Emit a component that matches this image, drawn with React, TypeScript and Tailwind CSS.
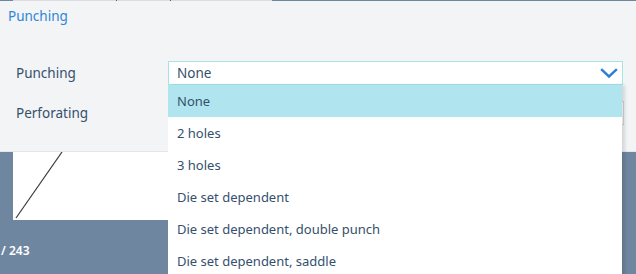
const font = { fontFamily: '"Noto Sans", "Open Sans", Arial, sans-serif' }

const options = [
  'None',
  '2 holes',
  '3 holes',
  'Die set dependent',
  'Die set dependent, double punch',
  'Die set dependent, saddle',
]

function Chevron() {
  return (
    <svg width="18" height="12" viewBox="0 0 18 12" fill="none" stroke="#2f7fd6" strokeWidth="2.4" strokeLinecap="square">
      <polyline points="2 3 9 9.5 16 3" />
    </svg>
  )
}

export default function App() {
  return (
    <div className="relative w-[636px] h-[274px] overflow-hidden bg-[#6f86a0]" style={font}>
      {/* top edge */}
      <div className="flex h-px">
        <div className="w-[13px] bg-[#6f86a0]" />
        <div className="w-[103px] bg-[#d9dde2]" />
        <div className="w-px bg-[#55606c]" />
        <div className="w-[53px] bg-[#d9dde2]" />
        <div className="w-px bg-[#55606c]" />
        <div className="w-[101px] bg-[#d9dde2]" />
        <div className="flex-1 bg-[#6f86a0]" />
      </div>

      {/* settings panel */}
      <div className="h-[151px] bg-[#f2f4f6] border-b border-[#e2e5e9]">
        <div className="pl-[8px] pt-[5px] text-[13.5px] leading-[20px] text-[#2f86d6]">Punching</div>
        <div className="mt-[35px] flex items-center h-[24px]">
          <div className="w-[168px] pl-[16px] text-[13.5px] text-[#34506d]">Punching</div>
          <div className="w-[455px] h-[24px] bg-white border border-[#a9e3ea] flex items-center justify-between pl-[8px] pr-[4px]">
            <span className="text-[13.5px] text-[#34506d]">None</span>
            <Chevron />
          </div>
        </div>
        <div className="mt-[16px] flex items-center h-[24px]">
          <div className="w-[168px] pl-[16px] text-[13.5px] text-[#34506d]">Perforating</div>
          <div className="w-[456px] h-[24px] bg-white border border-[#d4d7db]" />
        </div>
      </div>

      {/* preview behind */}
      <div className="ml-[13px] w-[200px] h-[68px] bg-white">
        <svg width="60" height="68" viewBox="0 0 60 68">
          <line x1="3" y1="66" x2="49" y2="0" stroke="#3a3a3a" strokeWidth="1.2" />
        </svg>
      </div>
      <div className="mt-[23px] pl-[1px] text-[12px] font-semibold text-white leading-[16px]">/ 243</div>

      {/* open dropdown list */}
      <div className="absolute left-[168px] top-[85px] w-[454px] bg-white shadow-[3px_0_3px_rgba(0,0,0,0.12)]">
        {options.map((o, i) => (
          <div
            key={o}
            className={`h-[32px] flex items-center pl-[9px] pt-[2px] text-[13px] text-[#34506d] ${i === 0 ? 'bg-[#b0e5ef]' : ''}`}
          >
            {o}
          </div>
        ))}
      </div>
    </div>
  )
}
